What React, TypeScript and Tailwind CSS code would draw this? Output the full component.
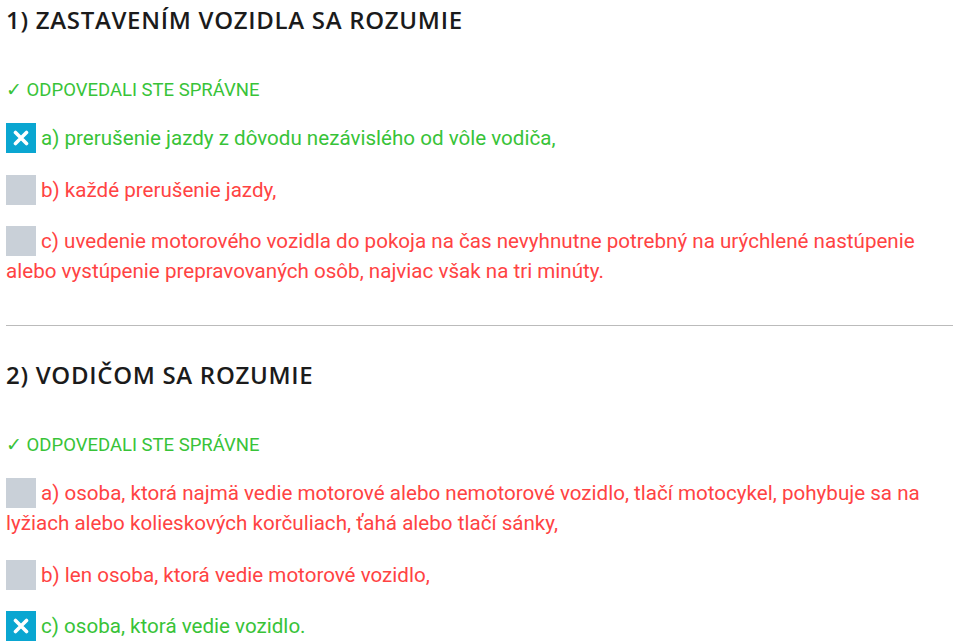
import React from 'react';

type Answer = { text: string; correct: boolean; checked: boolean };
type Question = { title: string; answers: Answer[] };

const questions: Question[] = [
  {
    title: '1) ZASTAVENÍM VOZIDLA SA ROZUMIE',
    answers: [
      { text: 'a) prerušenie jazdy z dôvodu nezávislého od vôle vodiča,', correct: true, checked: true },
      { text: 'b) každé prerušenie jazdy,', correct: false, checked: false },
      {
        text: 'c) uvedenie motorového vozidla do pokoja na čas nevyhnutne potrebný na urýchlené nastúpenie alebo vystúpenie prepravovaných osôb, najviac však na tri minúty.',
        correct: false,
        checked: false,
      },
    ],
  },
  {
    title: '2) VODIČOM SA ROZUMIE',
    answers: [
      {
        text: 'a) osoba, ktorá najmä vedie motorové alebo nemotorové vozidlo, tlačí motocykel, pohybuje sa na lyžiach alebo kolieskových korčuliach, ťahá alebo tlačí sánky,',
        correct: false,
        checked: false,
      },
      { text: 'b) len osoba, ktorá vedie motorové vozidlo,', correct: false, checked: false },
      { text: 'c) osoba, ktorá vedie vozidlo.', correct: true, checked: true },
    ],
  },
];

const CheckBox: React.FC<{ checked: boolean }> = ({ checked }) =>
  checked ? (
    <span className="inline-flex w-[30px] h-[30px] align-top items-center justify-center bg-[#0aa6d1] mr-[5px]">
      <svg width="16" height="16" viewBox="0 0 16 16">
        <path d="M2.5 2.5 L13.5 13.5 M13.5 2.5 L2.5 13.5" stroke="#fff" strokeWidth="3.6" strokeLinecap="round" />
      </svg>
    </span>
  ) : (
    <span className="inline-block w-[30px] h-[30px] align-top bg-[#c9d0d8] mr-[5px]" />
  );

const QuestionBlock: React.FC<{ q: Question }> = ({ q }) => (
  <section>
    <h2 className="font-['Open_Sans',sans-serif] font-semibold text-[24px] leading-[40px] tracking-[0.7px] text-[#1b1b1b]">
      {q.title}
    </h2>
    <p className="mt-[35px] font-['Roboto',sans-serif] text-[18.5px] leading-[30px] text-[#38c338]">
      ✓ ODPOVEDALI STE SPRÁVNE
    </p>
    <div className="mt-[18px] flex flex-col gap-[21.5px] font-['Roboto',sans-serif] text-[20.6px] leading-[30px]">
      {q.answers.map((a, i) => (
        <p key={i} className={a.correct ? 'text-[#38c338]' : 'text-[#ff4343]'}>
          <CheckBox checked={a.checked} />
          {a.text}
        </p>
      ))}
    </div>
  </section>
);

export default function App() {
  return (
    <div className="bg-white min-h-screen pl-[6px]">
      <QuestionBlock q={questions[0]} />
      <hr className="mt-[39px] mb-[29px] border-0 border-t border-[#bbbbbb]" />
      <QuestionBlock q={questions[1]} />
    </div>
  );
}
